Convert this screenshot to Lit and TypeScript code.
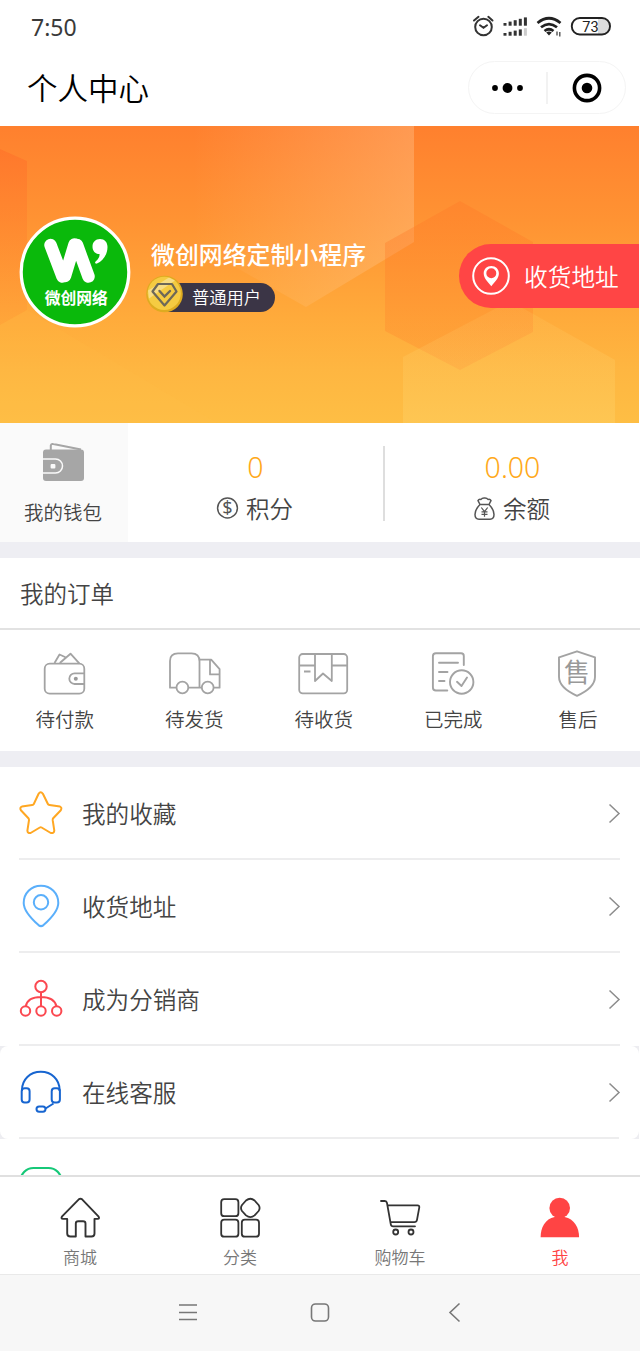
import { LitElement, html, css, svg } from "lit";
import { customElement } from "lit/decorators.js";
import { classMap } from "lit/directives/class-map.js";

// Every icon is drawn in page coordinates; the box is x, y, width, height.
const icon = (x: number, y: number, w: number, h: number, body: unknown) =>
  html`<svg width=${w} height=${h} viewBox="${x} ${y} ${w} ${h}" fill="none">${body}</svg>`;

const orders = [
  {
    label: "待付款",
    art: icon(41, 649, 48, 50, svg`<g stroke="#a3a3a3" stroke-width="1.8" stroke-linejoin="round">
      <rect x="44.7" y="663.7" width="39.6" height="30" rx="5"/>
      <path d="M54.5 663l5-8.5 6 2.8M59.8 663l10.7-9.3 9 10M84 673.4h-9.4a5.2 5.2 0 0 0 0 10.6H84"/></g>
      <circle cx="75.8" cy="678.7" r="2" fill="#999"/>`),
  },
  {
    label: "待发货",
    art: icon(167, 649, 54, 50, svg`<g stroke="#a3a3a3" stroke-width="1.8" stroke-linejoin="round">
      <path d="M176 687.700h-6V661q0-7.600 8-7.600h13.500q8 0 8 8v26.300H189M199.700 659.700h11.500l8.400 9.400v18.600h-5.600M199.700 687.700h2M210 660v14.400h9.400"/>
      <circle cx="182.400" cy="687.500" r="5.900"/><circle cx="207.700" cy="687.500" r="5.900"/></g>`),
  },
  {
    label: "待收货",
    art: icon(297, 649, 54, 50, svg`<g stroke="#a3a3a3" stroke-width="1.8" stroke-linejoin="round">
      <rect x="299.200" y="654" width="48" height="39.300" rx="3.500"/>
      <path d="M299 665.500h16M332 665.500h15M315 654v27l8-7.500 8.800 7.500v-27M304 671.500h6.500"/></g>`),
  },
  {
    label: "已完成",
    art: icon(429, 649, 48, 50, svg`<g stroke="#a3a3a3" stroke-width="1.900" stroke-linecap="round" stroke-linejoin="round">
      <path d="M463.800 665v-9q0-2.700-2.700-2.700h-25.200q-3 0-3 3v31.200q0 3 3 3h11.400M439 662.800h19M439 672h8.500M439 681h5.500"/>
      <circle cx="461.700" cy="682" r="11.700"/><path d="M457 681.800l4.500 4.200 5.500-8.500"/></g>`),
  },
  {
    label: "售后",
    art: icon(555, 647, 46, 52, svg`<path d="M577 651.300l18 6v19.500q0 11-18 19-18-8-18-19v-19.500z" stroke="#a3a3a3" stroke-width="1.900" stroke-linejoin="round"/>
      <text class="seal" x="577" y="682" text-anchor="middle">售</text>`),
  },
];

const entries = [
  {
    label: "我的收藏",
    art: icon(19, 789, 44, 48, svg`<path stroke="#ffa722" stroke-width="2" stroke-linejoin="round" d="M38.600 793.800q2-3 4.300 0l5 10.200q.4.800 1.600 1l10.500 1.600q2.300 1 .8 3.600l-7.600 8q-.6.800-.5 2l1.600 10.400q-.3 3-3.500 2.400l-9.200-5.500q-.9-.5-1.800 0l-9.200 5.500q-3 .6-3.200-2.400l1.600-10.400q0-1.200-.6-2l-7.500-8q-1.500-2.600 1-3.600l10.300-1.600q1.200-.2 1.600-1z"/>`),
  },
  {
    label: "收货地址",
    art: icon(19, 882, 44, 48, svg`<g stroke="#5aaffb" stroke-width="2" stroke-linejoin="round"><path d="M41 885.800c-10 0-17.300 7.600-17.300 17.200 0 8.500 9.500 17.400 14.800 22.100q2.500 2 5 0c5.300-4.700 14.800-13.600 14.800-22.100 0-9.600-7.300-17.200-17.300-17.200z"/><circle cx="41" cy="902.300" r="7.200"/></g>`),
  },
  {
    label: "成为分销商",
    art: icon(19, 975, 44, 48, svg`<g stroke="#fb4850" stroke-width="2"><circle cx="41" cy="986.500" r="5.700"/><circle cx="25.500" cy="1011" r="4.700"/><circle cx="41" cy="1011" r="4.700"/><circle cx="56.700" cy="1011" r="4.700"/><path d="M41 992v14M25.800 1006.300c1-5.500 6-9.300 15.200-9.300s14.200 3.800 15.400 9.300"/></g>`),
  },
  {
    label: "在线客服",
    card: true,
    art: icon(19, 1068, 44, 48, svg`<g stroke="#1765d0" stroke-width="2"><path d="M22 1091v-1c0-10.500 8-18.200 18.800-18.200s18.800 7.700 18.800 18.200v1M53.500 1103.500l-8 5"/><rect x="21.700" y="1088.300" width="7.900" height="14.200" rx="3"/><rect x="51.700" y="1088.300" width="8.200" height="14.200" rx="3"/><rect x="36.500" y="1106.500" width="9" height="5.200" rx="2.600"/></g>`),
  },
];

const tabs = [
  {
    label: "商城",
    art: icon(58, 1194, 44, 46, svg`<path stroke="#333" stroke-width="1.900" stroke-linejoin="round" d="M78.800 1199.300q1.700-1.300 3.300 0l16.300 17q1.600 2.400-.8 2.600h-3.100v14.600q0 3-3 3h-6v-13q0-2.200-2.500-2.200h-4.700q-2.500 0-2.500 2.200v13h-5.400q-3.200 0-3.200-3v-14.600h-4.100q-2.600-.2-1-2.600z"/>`),
  },
  {
    label: "分类",
    art: icon(218, 1194, 44, 46, svg`<g stroke="#333" stroke-width="1.800" stroke-linejoin="round"><rect x="221.200" y="1199.200" width="17.200" height="17" rx="3"/><rect x="221.200" y="1219.700" width="17.200" height="17" rx="3"/><rect x="241.800" y="1219.700" width="17.200" height="17" rx="3"/><path d="M246 1200.500q4.400-3.500 8.600 0l4 4.500q2 3 0 6l-4 4.400q-4.200 3.300-8.600 0l-4-4.400q-2-3 0-6z"/></g>`),
  },
  {
    label: "购物车",
    art: icon(378, 1194, 44, 46, svg`<g stroke="#333" stroke-width="1.800" stroke-linecap="round" stroke-linejoin="round"><path d="M381 1201h3.800q1.800 0 2.200 2l3.800 21.300q.4 2 2.300 2H415M388 1205.300h29.500q2 0 1.800 2l-2.300 12.500q-.4 2.300-2.800 2.300h-23.500"/><circle cx="395.700" cy="1232" r="2.500"/><circle cx="411" cy="1232" r="2.500"/></g>`),
  },
  {
    label: "我",
    active: true,
    art: icon(538, 1194, 44, 46, svg`<g fill="#ff4444"><circle cx="559.700" cy="1208" r="10.300"/><path d="M540.600 1237.300c0-10 4.600-18.300 14-20.300h10c9.600 2 14.500 10.300 14.500 20.300z"/></g>`),
  },
];

@customElement("app-root")
export class AppRoot extends LitElement {
  static styles = css`
    :host {
      display: flex;
      flex-direction: column;
      box-sizing: border-box;
      width: 640px;
      height: 1351px;
      overflow: hidden;
      background: #fff;
      color: #444;
      font-family: "Noto Sans CJK SC", sans-serif;
      font-weight: 350;
    }
    * { box-sizing: border-box; }
    svg { display: block; flex: none; }
    .status {
      display: flex;
      justify-content: space-between;
      height: 54px;
      padding: 13px 28px 0 31px;
      flex: none;
    }
    .clock { font: 400 23px/28px "Noto Sans", sans-serif; color: #3a3a3a; }
    .battery { font: 400 14.500px Roboto, sans-serif; fill: #222; }
    .navbar {
      display: flex;
      align-items: center;
      justify-content: space-between;
      height: 72px;
      padding: 0 14px 0 27px;
      flex: none;
    }
    .title { font-size: 30.500px; line-height: 44px; color: #000; margin-top: -7px; }
    .capsule {
      display: flex;
      align-items: center;
      width: 158px;
      height: 53px;
      margin-top: -5px;
      border: 1.500px solid #f4f4f4;
      border-radius: 27px;
    }
    .capsule svg { margin: -1px; }
    .hero { display: grid; width: 639px; height: 297px; flex: none; }
    .hero > * { grid-area: 1 / 1; }
    .profile { display: flex; align-items: flex-start; position: relative; }
    .avatar { margin: 90px 0 0 19px; }
    .logo { font-size: 15.800px; font-weight: 700; fill: #fff; }
    .who { flex: 1; padding: 111px 0 0 16px; }
    .name { font-size: 23.900px; line-height: 34px; font-weight: 500; color: #fff; margin-left: 4px; }
    .level { display: flex; align-items: center; height: 38px; margin: 4px 0 0 -1px; }
    .badge {
      display: flex;
      align-items: center;
      height: 29px;
      width: 110px;
      margin-left: -19px;
      margin-top: 6px;
      padding: 0 0 1px 27px;
      border-radius: 0 15px 15px 0;
      background: #3b3546;
      color: #fff;
      font-size: 17.300px;
      white-space: nowrap;
    }
    .coin { position: relative; }
    .address {
      display: flex;
      align-items: center;
      width: 180px;
      height: 64px;
      margin-top: 118px;
      padding-left: 12px;
      gap: 13px;
      border-radius: 32px 0 0 32px;
      background: #ff4545;
      color: #fff;
      font-size: 23.700px;
      white-space: nowrap;
    }
    .wallet { display: flex; height: 119px; flex: none; }
    .mine {
      display: flex;
      flex-direction: column;
      align-items: center;
      width: 128px;
      padding: 16px 2px 0 0;
      background: #fafafa;
      font-size: 19.500px;
      line-height: 28px;
    }
    .mine svg { margin-bottom: 15px; }
    .stat { flex: 1; display: flex; flex-direction: column; align-items: center; padding-top: 25px; }
    .split { width: 2px; height: 75px; margin-top: 23px; background: #dedede; }
    .value { font: 300 28.500px/38px "Noto Sans", sans-serif; color: #ffa91a; }
    .caption { display: flex; align-items: center; gap: 7px; margin: 5px 2px 0 0; font-size: 23.500px; line-height: 34px; }
    .dollar { font: 400 18px "Noto Sans", sans-serif; fill: #555; }
    .gap { height: 16px; background: #eeeef3; flex: none; }
    .heading { height: 72px; flex: none; border-bottom: 2px solid #e2e2e2; padding: 18px 20px 0; font-size: 23.500px; line-height: 34px; }
    .orders { display: flex; height: 121px; flex: none; }
    .order { display: flex; flex-direction: column; align-items: center; width: 129.500px; padding-top: 19px; font-size: 19.500px; line-height: 28px; }
    .order:last-child { width: 120px; padding-top: 17px; }
    .order svg { margin-bottom: 6px; }
    .seal { font-size: 26px; font-weight: 400; fill: #999; }
    .list { flex: 1; min-height: 0; overflow: hidden; background: #fff; }
    .entry { display: flex; align-items: center; height: 93px; padding: 0 19px 2px; position: relative; }
    .entry::after { content: ""; position: absolute; left: 19px; right: 20px; bottom: 0; height: 2px; background: #ededee; }
    .entry span { flex: 1; margin-left: 19px; font-size: 23.600px; line-height: 34px; }
    .shade { background: #ededf1; width: 639px; }
    .shade .entry { background: #fff; border-radius: 8px; padding-right: 18px; }
    .next { padding: 26px 0 0 19px; }
    .tabs { display: flex; height: 100px; flex: none; border-top: 2px solid #e0e0e0; border-bottom: 1px solid #e9e9e9; background: #fff; }
    .tab { flex: 1; display: flex; flex-direction: column; align-items: center; padding-top: 17px; font-size: 17px; line-height: 24px; color: #777; }
    .tab svg { margin-bottom: 5px; }
    .tab.active { color: #ff4444; }
    .system { display: flex; justify-content: center; height: 76px; flex: none; background: #f7f7f7; padding-top: 24px; gap: 106px; }
  `;

  private statusIcons() {
    const bars = [0, 1, 2, 3, 4];
    return icon(470, 13, 142, 28, svg`
      <g stroke="#333" stroke-width="2" stroke-linecap="round"><circle cx="483.500" cy="27" r="8.300"/>
      <path d="M480 25.300l3.500 2.500 3.500-2.500M474 20.500l4.500-3.700M492.500 20.500l-4.200-3.700"/></g>
      ${bars.map((i) => svg`<rect x=${503.5 + i * 5.1} y=${23 - i * 1.4} width="3" height=${2.7 + i * 1.4} fill="#333"/>
        <rect x=${503.5 + i * 5.1} y=${33 - i * 1.2} width="3" height=${2.7 + i * 1.2} fill=${i === 4 ? "#ccc" : "#333"}/>`)}
      <g stroke="#222" stroke-width="2.700"><path d="M537.500 23q11.500-9.500 23 0M541 27.300q8-6.500 16 0M544.500 31q4.500-3.500 9 0"/></g>
      <path d="M546.200 32.500q2.800-1.800 5.600 0l-2.800 3z" fill="#222"/>
      <path d="M557 31.500v4M559.800 32v4.500" stroke="#444" stroke-width="1.300"/>
      <path d="M598 19h4.500a7.500 7.500 0 0 1 0 15H598z" fill="#ddd"/>
      <rect x="571.800" y="18" width="38.200" height="16.500" rx="8" stroke="#222" stroke-width="1.900"/>
      <text class="battery" x="590.500" y="31.500" text-anchor="middle">73</text>`);
  }

  private backdrop() {
    return html`<svg width="639" height="297" viewBox="0 126 639 297">
      <defs>
        <linearGradient id="sky" x1="0" y1="0" x2="0" y2="1">
          <stop offset="0" stop-color="#ff802e"/><stop offset=".32" stop-color="#ff9333"/>
          <stop offset=".65" stop-color="#ffab3b"/><stop offset=".82" stop-color="#feb641"/><stop offset="1" stop-color="#febe44"/>
        </linearGradient>
        <linearGradient id="glow" x1="0" y1="0" x2="1" y2="0">
          <stop offset="0" stop-color="#ffd0a0" stop-opacity="0"/><stop offset="1" stop-color="#ffd0a0" stop-opacity=".32"/>
        </linearGradient>
        <linearGradient id="ember" x1="0" y1="0" x2="0" y2="1">
          <stop offset="0" stop-color="#ff6226" stop-opacity=".36"/><stop offset="1" stop-color="#ff7a2c" stop-opacity=".12"/>
        </linearGradient>
        <linearGradient id="dusk" x1="0" y1="0" x2="0" y2="1">
          <stop offset="0" stop-color="#ff7a28" stop-opacity=".4"/><stop offset="1" stop-color="#ff7a28" stop-opacity=".22"/>
        </linearGradient>
        <linearGradient id="haze" x1="0" y1="0" x2="0" y2="1">
          <stop offset="0" stop-color="#ffe080" stop-opacity=".1"/><stop offset="1" stop-color="#ffe080" stop-opacity=".24"/>
        </linearGradient>
      </defs>
      <rect y="126" width="639" height="297" fill="url(#sky)"/>
      <path d="M0 149l27 12v149l-27 15z" fill="url(#ember)"/>
      <path d="M193 126h221v116l-108 65-113-64z" fill="url(#glow)"/>
      <path d="M460 201l73 41v90l-73 38-75-39v-88z" fill="url(#dusk)"/>
      <path d="M403 423v-66l107-56 105 59v63z" fill="url(#haze)"/>
      <path d="M0 325l27-15 190 113H0z" fill="#ffc24a" fill-opacity=".1"/>
    </svg>`;
  }

  private avatar() {
    return html`<svg class="avatar" width="112" height="112" viewBox="19 216 112 112">
      <circle cx="75" cy="272" r="53.800" fill="#0ab90b" stroke="#fff" stroke-width="3.200"/>
      <g stroke="#fff" stroke-width="12.500" stroke-linecap="round" fill="none">
        <path d="M50.500 245l12 31.500M77 245l11.500 31.500M74.500 244.500l-9.500 31.500"/></g>
      <path d="M100 239c4.500 0 7.500 3 7.500 8 0 7.500-4.500 14-10.500 16.500-1.800.6-2.600-1-1.200-2.200 2.700-2.300 4-4.800 3.700-7.300-4.500 0-7-3.200-7-7.300 0-4.500 3-7.700 7.500-7.700z" fill="#fff"/>
      <text class="logo" x="76.300" y="303.500" text-anchor="middle">微创网络</text>
    </svg>`;
  }

  render() {
    return html`
      <div class="status"><span class="clock">7:50</span>${this.statusIcons()}</div>
      <div class="navbar">
        <span class="title">个人中心</span>
        <div class="capsule">
          ${icon(468, 61, 158, 53, svg`<g fill="#000"><circle cx="495" cy="88" r="2.900"/><circle cx="507.500" cy="88" r="4.900"/><circle cx="520" cy="88" r="2.900"/><circle cx="587" cy="88" r="5.300"/></g>
          <circle cx="587" cy="88" r="12.600" stroke="#000" stroke-width="3.600"/><path d="M547 72v32" stroke="#eee" stroke-width="1.500"/>`)}
        </div>
      </div>
      <div class="hero">
        ${this.backdrop()}
        <div class="profile">
          ${this.avatar()}
          <div class="who">
            <div class="name">微创网络定制小程序</div>
            <div class="level">
              <svg class="coin" width="38" height="38" viewBox="147 275.500 38 38" fill="none">
                <circle cx="165.500" cy="294.500" r="18.300" fill="#deab20"/>
                <circle cx="165.200" cy="293.800" r="16.600" fill="#f5cb42"/>
                <path d="M149 291l21-13 6 3-26 18z" fill="#fff" fill-opacity=".35"/>
                <path d="M159 284.500h14l4.500 7.500-12 14-12-14z" stroke="#6d6858" stroke-width="2.200" stroke-linejoin="round"/>
                <path d="M160.500 291.500l5 5.500 5.500-5.500" stroke="#6d6858" stroke-width="2.400" stroke-linecap="round"/>
              </svg>
              <span class="badge">普通用户</span>
            </div>
          </div>
          <div class="address">
            ${icon(471, 256, 40, 40, svg`<circle cx="491" cy="276" r="17.800" stroke="#fff" stroke-width="2"/>
            <path fill="#fff" fill-rule="evenodd" d="M491.300 266c-4.500 0-7.600 3.200-7.600 7.400 0 4.800 4.600 9 7.600 12.800 3-3.800 7.600-8 7.600-12.800 0-4.200-3.100-7.400-7.600-7.400zm0 2.300a5 5 0 1 1 0 10 5 5 0 0 1 0-10z"/>`)}
            <span>收货地址</span>
          </div>
        </div>
      </div>
      <div class="wallet">
        <div class="mine">
          ${icon(41, 439, 46, 44, svg`<path d="M51.800 451v-5.500q.5-2 2.500-1.500L82 449.500" stroke="#a6a6a6" stroke-width="2"/>
          <rect x="44" y="449.500" width="41" height="31.500" rx="3" fill="#a6a6a6"/>
          <path d="M44 459h12.500a7 7 0 0 1 0 14H44" stroke="#fafafa" stroke-width="1.500"/><rect x="51.600" y="464" width="4.800" height="4.500" rx="1" fill="#fafafa"/>`)}
          <span>我的钱包</span>
        </div>
        <div class="stat">
          <span class="value">0</span>
          <span class="caption">${icon(216, 497, 23, 24, svg`<circle cx="227.500" cy="509" r="9.900" stroke="#555" stroke-width="1.500"/><text class="dollar" x="227.500" y="515.300" text-anchor="middle">$</text>`)}积分</span>
        </div>
        <div class="split"></div>
        <div class="stat">
          <span class="value">0.00</span>
          <span class="caption">${icon(472, 496, 23, 25, svg`<path stroke="#555" stroke-width="1.500" stroke-linejoin="round" d="M479 504.500l-2-3.800q1-2 3-1.200 1-1.800 3.500-1.600 2.500-.2 3.500 1.600 2-.8 3 1.200l-2 3.800zM479 504.500c-3 3-5 6-5 10 0 3 1.500 4.700 4 4.700h11c2.500 0 4-1.700 4-4.700 0-4-2-7-5-10"/><path stroke="#555" stroke-width="1.200" d="M480.300 507.500l3.200 4 3.200-4M483.500 511.500v5.300M480.500 511.800h6M480.500 514.300h6"/>`)}余额</span>
        </div>
      </div>
      <div class="gap"></div>
      <div class="heading">我的订单</div>
      <div class="orders">${orders.map((o) => html`<div class="order">${o.art}<span>${o.label}</span></div>`)}</div>
      <div class="gap"></div>
      <div class="list">
        ${entries.map((e) => html`<div class=${classMap({ shade: !!e.card })}><div class="entry">
          ${e.art}<span>${e.label}</span>
          ${icon(607, 802, 14, 22, svg`<path d="M609.500 804.500l9.500 9-9.500 9" stroke="#8c8c8c" stroke-width="1.500"/>`)}
        </div></div>`)}
        <div class="next">${icon(19, 1165, 44, 48, svg`<rect x="20.500" y="1168" width="41" height="38" rx="13" stroke="#16c878" stroke-width="2.200"/>`)}</div>
      </div>
      <div class="tabs">${tabs.map((t) => html`<div class=${classMap({ tab: true, active: !!t.active })}>${t.art}<span>${t.label}</span></div>`)}</div>
      <div class="system">
        ${icon(172, 1299, 28, 28, svg`<path d="M179 1305h18M179 1312.500h18M179 1319.500h18" stroke="#777" stroke-width="1.600"/>`)}
        ${icon(306, 1299, 28, 28, svg`<rect x="311.500" y="1304" width="17" height="17" rx="4" stroke="#777" stroke-width="1.600"/>`)}
        ${icon(440, 1299, 28, 28, svg`<path d="M459.500 1303.500l-9.500 9 9.500 9" stroke="#777" stroke-width="1.600"/>`)}
      </div>
    `;
  }
}
